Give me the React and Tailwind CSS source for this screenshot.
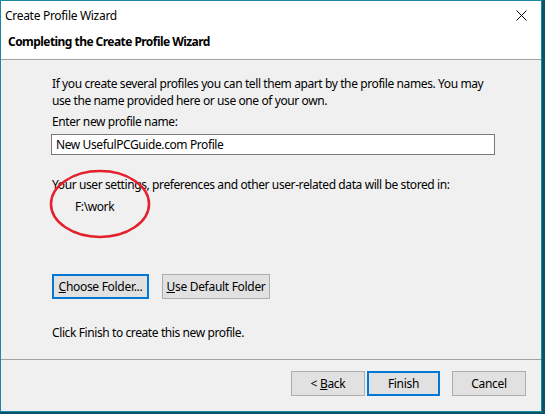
import React from 'react';

const font = { fontFamily: '"Noto Sans", "Open Sans", sans-serif' };

function WinButton({ children, primary, className = '' }) {
  return (
    <button
      type="button"
      className={`h-[25px] flex items-center justify-center bg-[#e1e1e1] text-[12px] text-black leading-none tracking-[-0.3px] ${
        primary ? 'border-2 border-[#0078d7]' : 'border border-[#adadad]'
      } ${className}`}
    >
      {children}
    </button>
  );
}

export default function App() {
  return (
    <div className="w-[545px] h-[414px] bg-[#0b5466] overflow-hidden relative" style={font}>
      <div className="w-[542px] h-[412px] border border-[#1b87a6] bg-white flex flex-col">
        {/* Title bar */}
        <div className="h-[29px] flex items-center justify-between pl-[4px] pr-[14px]">
          <span className="text-[12px] text-black tracking-[-0.3px]">Create Profile Wizard</span>
          <svg width="11" height="11" viewBox="0 0 11 11" aria-hidden="true">
            <path d="M0.5 0.5 L10.5 10.5 M10.5 0.5 L0.5 10.5" stroke="#000" strokeWidth="1" />
          </svg>
        </div>
        {/* Header */}
        <div className="h-[30px] flex items-start pt-[4px] pl-[7px] border-b border-[#a0a0a0]">
          <span className="text-[12px] leading-[16px] font-bold text-black tracking-[-0.55px]">
            Completing the Create Profile Wizard
          </span>
        </div>
        {/* Body */}
        <div className="flex-1 bg-[#f0f0f0] flex flex-col relative">
          <div className="h-[300px] border-b border-[#a0a0a0] pl-[51px] pt-[15px] flex flex-col text-[12px] text-black tracking-[-0.4px] relative">
            <p className="leading-[17px] w-[442px]">
              If you create several profiles you can tell them apart by the profile names. You may use the name provided here or use one of your own.
            </p>
            <p className="leading-[16px] mt-[5px]">Enter new profile name:</p>
            <div className="mt-[4px] h-[21px] w-[444px] -ml-[1px] border border-[#7a7a7a] bg-white flex items-center pl-[4px]">
              New UsefulPCGuide.com Profile
            </div>
            <p className="leading-[16px] mt-[22px]">
              Your user settings, preferences and other user-related data will be stored in:
            </p>
            <p className="leading-[16px] mt-[6px] pl-[23px]">F:\work</p>
            <div className="flex gap-[13px] mt-[59px]">
              <WinButton primary className="w-[97px]">
                <span><span className="underline">C</span>hoose Folder...</span>
              </WinButton>
              <WinButton className="w-[108px]">
                <span><span className="underline">U</span>se Default Folder</span>
              </WinButton>
            </div>
            <p className="leading-[16px] mt-[26px]">Click Finish to create this new profile.</p>
            <svg
              className="absolute left-[47px] top-[109px]"
              width="104"
              height="70"
              viewBox="0 0 104 70"
              aria-hidden="true"
            >
              <ellipse cx="52" cy="35" rx="49" ry="33" fill="none" stroke="#e3202c" strokeWidth="2.5" />
            </svg>
          </div>
          <div className="flex-1 flex items-start justify-end pt-[11px] pr-[15px]">
            <WinButton className="w-[74px]">
              <span>&lt; <span className="underline">B</span>ack</span>
            </WinButton>
            <WinButton primary className="w-[73px] ml-[2px]">Finish</WinButton>
            <WinButton className="w-[74px] ml-[12px]">Cancel</WinButton>
          </div>
        </div>
      </div>
    </div>
  );
}
